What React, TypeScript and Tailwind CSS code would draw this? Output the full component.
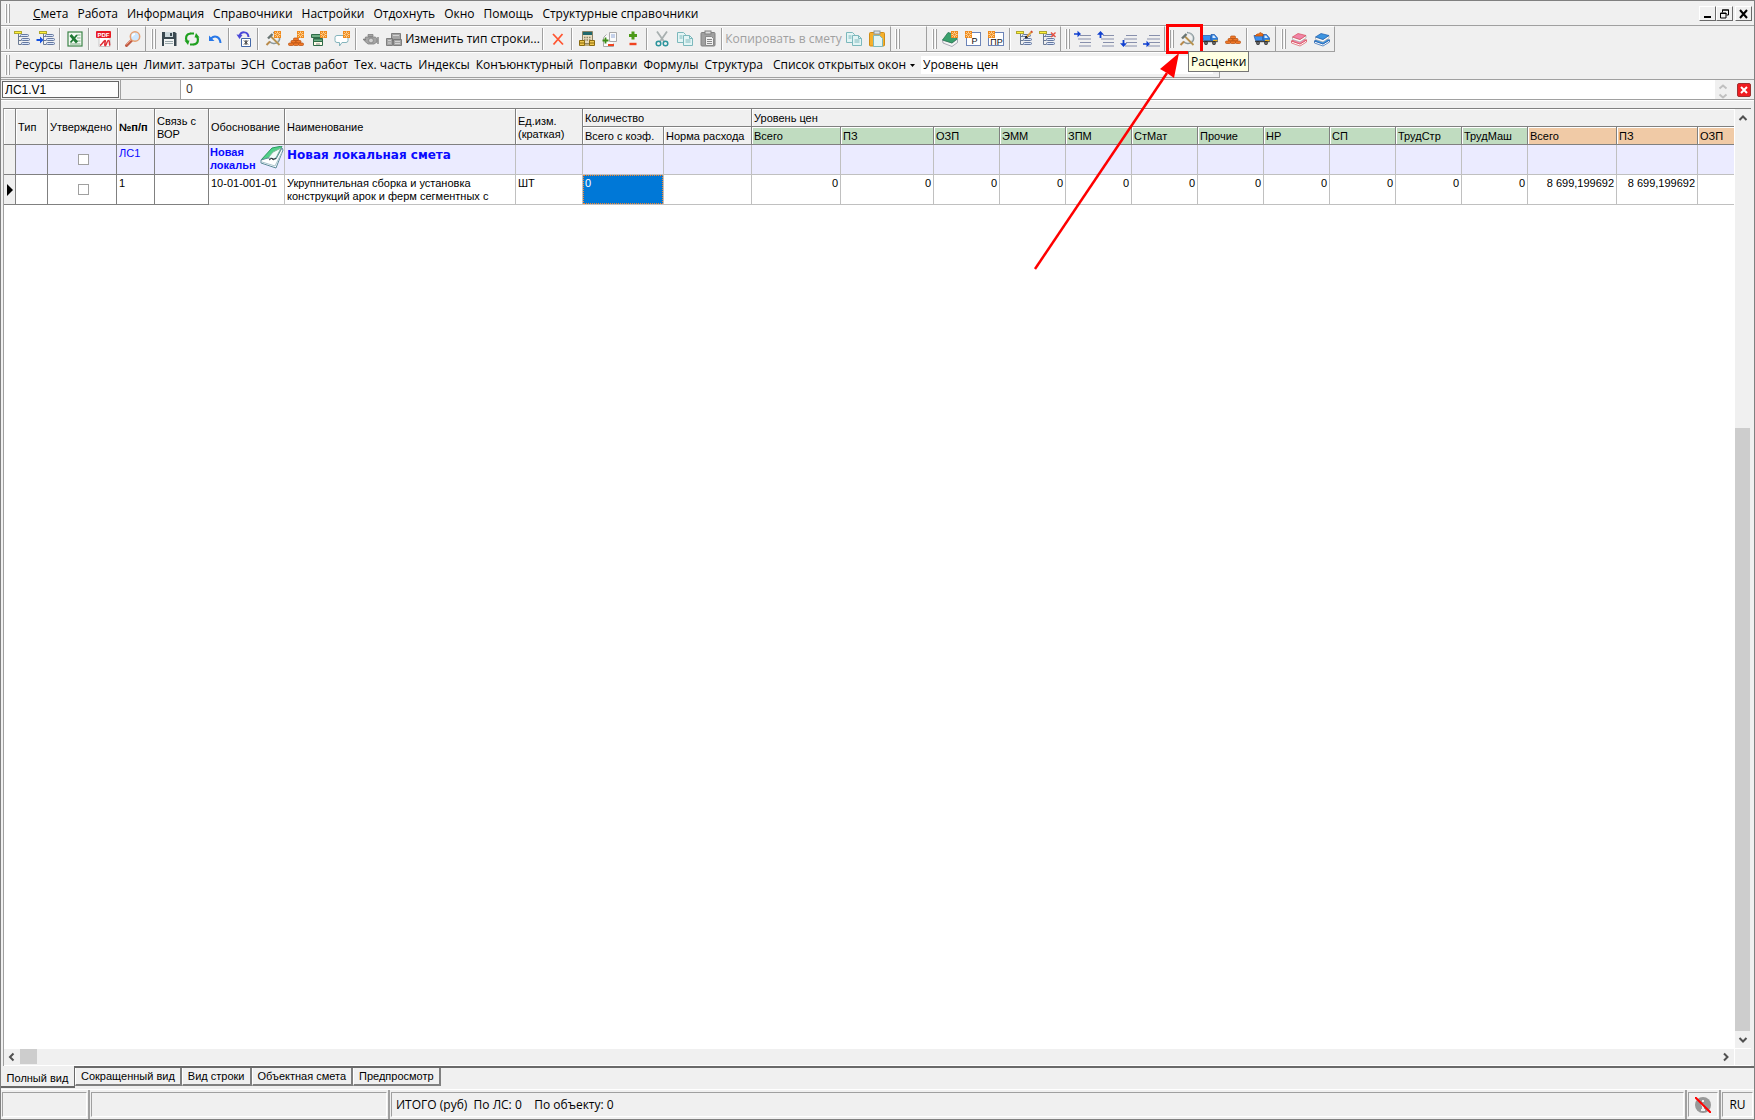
import { type ReactNode } from "react";
import clsx from "clsx";

/* Icons, all drawn on a 16x16 grid */

function Gear({ x = 9 }: { x?: number }) {
  return (
    <g transform={`translate(${x} 0)`}>
      <rect width="7" height="7" fill="#f08a1c" />
      <path d="M3.5 0.5v6M0.5 3.5h6M1.2 1.2l4.6 4.6M5.8 1.2l-4.6 4.6" stroke="#ffe2b0" strokeWidth="0.9" />
      <circle cx="3.5" cy="3.5" r="1.2" fill="#f08a1c" />
    </g>
  );
}

function TreeRows() {
  return (
    <g>
      <path d="M3.5 2v11.500h3M3.500 5.500h3M3.500 9.500h3" stroke="#6a7a94" fill="none" />
      <rect x="5.500" y="3.500" width="8" height="2" rx="1" fill="#dbe6fa" stroke="#6478a0" />
      <rect x="6.500" y="7.500" width="8" height="2" rx="1" fill="#dbe6fa" stroke="#6478a0" />
      <rect x="6.500" y="11.500" width="8" height="2" rx="1" fill="#dbe6fa" stroke="#6478a0" />
    </g>
  );
}

function TreeRoot() {
  return <rect x="-0.500" y="0.500" width="7" height="2" fill="#fff23a" stroke="#b0a830" />;
}

function SickleHammer() {
  return (
    <g fill="none">
      <path d="M8 1.500c6 .5 8.500 6 5 9.500-2.800 2.600-6.500 1.500-8.500-.5" stroke="#8a989c" strokeWidth="1.500" />
      <path d="M9 1.700c4.500 1 6 5.500 3.200 8.500" stroke="#c8d4d6" strokeWidth="0.700" />
      <path d="M5 10.500L1.500 14" stroke="#b98a4a" strokeWidth="2" />
      <path d="M6 5.500l8.500 8.500" stroke="#b8924e" strokeWidth="1.800" />
      <path d="M3 7.500L7.500 3" stroke="#6a7674" strokeWidth="2.400" />
    </g>
  );
}

function Bricks() {
  return (
    <g fill="#f07828" stroke="#b44a08" strokeWidth="0.700">
      <rect x="5.500" y="5" width="5" height="2.500" rx="1" />
      <rect x="3" y="7.500" width="5" height="2.500" rx="1" />
      <rect x="8" y="7.500" width="5" height="2.500" rx="1" />
      <rect x="0.500" y="10" width="5" height="2.500" rx="1" />
      <rect x="5.500" y="10" width="5" height="2.500" rx="1" />
      <rect x="10.500" y="10" width="5" height="2.500" rx="1" />
    </g>
  );
}

function Truck() {
  return (
    <g>
      <path d="M0 4.500h8.500v5H1.500z" fill="#3a8ff0" stroke="#1b56a8" strokeWidth="0.700" />
      <path d="M9 3.500h3.500l3 3.500v3.500H9z" fill="#2c7fe0" stroke="#1b56a8" strokeWidth="0.700" />
      <path d="M10.500 4.500h1.700l1.800 2.500h-3.500z" fill="#d8ecff" />
      <path d="M1 10.500h14.500" stroke="#444" strokeWidth="1.400" />
      <path d="M11 9.500h4.500" stroke="#f0b020" strokeWidth="1.400" />
      <circle cx="4" cy="12" r="1.900" fill="#2a2a2a" />
      <circle cx="12" cy="12" r="1.900" fill="#2a2a2a" />
      <circle cx="4" cy="12" r="0.700" fill="#ccc" />
      <circle cx="12" cy="12" r="0.700" fill="#ccc" />
    </g>
  );
}

function Books({ color, dark }: { color: string; dark: string }) {
  return (
    <g strokeWidth="0.700">
      <path d="M0.500 10L9 13l6.500-4v2L9 15l-8.500-3z" fill="#fff" stroke={dark} />
      <path d="M0.500 10L6 7.500l9.500 1.500L9 13z" fill={color} stroke={dark} />
      <path d="M1.500 6L9 8.500l6-4v2.500l-6 4-7.500-2.500z" fill="#fafafa" stroke="#aaa" />
      <path d="M1.500 6L7 2.500l8 2-6 4z" fill={color} stroke={dark} />
    </g>
  );
}

function Lines() {
  return <path d="M5 4.500h11M3 8h13M5 11.500h11M4 15h12" stroke="#8890ac" />;
}

function CopyPages() {
  return (
    <g fill="#e3f5f5" stroke="#7cb8bc">
      <path d="M0.500 1.500h6l2 2v8h-8z" />
      <path d="M6.500 4.500h6l3 3v7h-9z" />
      <path d="M12.500 4.500v3h3M2.500 5h3M2.500 7h3M8.500 9h5M8.500 11h5" fill="none" />
    </g>
  );
}

const icons: Record<string, ReactNode> = {
  tree: (
    <>
      <TreeRows />
      <TreeRoot />
    </>
  ),
  treeArrow: (
    <>
      <g transform="translate(2 0)">
        <TreeRows />
        <TreeRoot />
      </g>
      <path d="M-1.500 8H2V5.500L5.500 9 2 12.500V10h-3.500z" fill="#1450e0" />
    </>
  ),
  excel: (
    <>
      <rect x="1" y="1" width="14" height="14" fill="#f4faf4" stroke="#3c8448" strokeWidth="1.200" />
      <path d="M10 4h3.500M10 7h3.500M10 10h3.500M3 13h10.500" stroke="#7cac84" />
      <path d="M3.500 4l6.500 7.500" stroke="#1f7a34" strokeWidth="2.800" />
      <path d="M10 4l-6.500 7.500" stroke="#1f7a34" strokeWidth="1.800" />
    </>
  ),
  pdf: (
    <>
      <path d="M3 4h11v11.500H3z" fill="#fff" stroke="#c8c8c8" />
      <rect x="0" y="0" width="15" height="7" rx="1" fill="#e81c24" />
      <text x="7.500" y="5.700" textAnchor="middle" fontSize="6" fontWeight="700" fill="#fff" fontFamily="Liberation Sans, sans-serif">
        PDF
      </text>
      <path d="M4 14.500c2-1 4-5 5-5s-1 4 0 5 2-5 3.500-5 .500 4 1.500 5" fill="none" stroke="#e03038" strokeWidth="1.500" />
    </>
  ),
  magnifier: (
    <>
      <path d="M7 9L1.500 14.500" stroke="#c05a44" strokeWidth="3" strokeLinecap="round" />
      <path d="M6.500 8.500L1.500 13.500" stroke="#f0a080" strokeWidth="1" />
      <circle cx="10" cy="5.500" r="4.700" fill="#cfe8ff" stroke="#e8a070" strokeWidth="1.500" />
      <path d="M7.500 5.500a2.500 2.500 0 0 1 2.500-2.500" stroke="#fff" fill="none" strokeWidth="1.300" />
    </>
  ),
  save: (
    <>
      <path d="M1 1h13l1.500 1.500V15H1z" fill="#3a4850" />
      <rect x="4" y="1" width="8" height="5" fill="#cdd8dc" />
      <rect x="9" y="2" width="2" height="3" fill="#3a4850" />
      <rect x="3" y="8" width="10" height="7" fill="#f2f4f4" />
      <path d="M4 10.500h8M4 12.500h8" stroke="#9aa8ac" />
    </>
  ),
  refresh: (
    <g fill="none" stroke="#1fa01f" strokeWidth="2.200">
      <path d="M6.500 2.500C2 3 1 7 3 10.500" />
      <path d="M9.500 13.500C14 13 15 9 13 5.500" />
      <path d="M0.500 9.500h5l-1.500 4.500z" fill="#1fa01f" stroke="none" />
      <path d="M15.500 6.500h-5L12 2z" fill="#1fa01f" stroke="none" />
      <path d="M6 2.500h4M10 13.500H6" strokeWidth="1.800" />
    </g>
  ),
  undo: (
    <>
      <path d="M4 7.500c4-4 9-1.500 9.500 4.500" fill="none" stroke="#2878e8" strokeWidth="2" />
      <path d="M2 4.500V10h5.500z" fill="#2878e8" />
    </>
  ),
  restore: (
    <>
      <path d="M3.500 5C5 0 12 0 12.500 6" fill="none" stroke="#4a48d8" strokeWidth="2" />
      <path d="M0.500 3.500l6 .500-3 4z" fill="#4a48d8" />
      <path d="M5.500 7.500h9v8h-9z" fill="#fff" stroke="#4468a8" />
      <path d="M8 9.500l4 4M12 9.500l-4 4M10 9v5" stroke="#333" />
    </>
  ),
  rate: <SickleHammer />,
  rateNew: (
    <>
      <SickleHammer />
      <Gear />
    </>
  ),
  bricks: <Bricks />,
  bricksNew: (
    <>
      <g transform="translate(0 2)">
        <Bricks />
      </g>
      <Gear x={9} />
    </>
  ),
  cabinetNew: (
    <>
      <path d="M0.500 3.500h12v3h-12z" fill="#6fae84" stroke="#2f6b48" />
      <path d="M2.500 7.500h9v7h-9z" fill="#fffbe8" stroke="#2f6b48" />
      <path d="M2.500 8h9v2.500h-9z" fill="#6fae84" stroke="#2f6b48" />
      <path d="M5 13h4" stroke="#888" />
      <Gear />
    </>
  ),
  commentNew: (
    <>
      <path d="M3 4.500h9a2 2 0 0 1 2 2v3a2 2 0 0 1-2 2H8L5.500 15v-3.500H3a2 2 0 0 1-2-2v-3a2 2 0 0 1 2-2z" fill="#fff" stroke="#84b4bc" />
      <Gear />
    </>
  ),
  engine: (
    <g stroke="#808080" strokeWidth="0.800">
      <path d="M5 3.500h5v2H5zM2.500 6h10l1.500 2v3l-3 2H5l-3.500-3z" fill="#a4a4a4" />
      <path d="M0 8.500h3M15 6v7" strokeWidth="1.400" />
      <circle cx="8" cy="9.500" r="2.400" fill="#d0d0d0" />
    </g>
  ),
  blocks: (
    <g fill="#a4a4a4" stroke="#6c6c6c" strokeWidth="0.800">
      <path d="M5.500 2.500h9v7h-9z" />
      <path d="M0.500 7.500h6v7h-6zM7.500 8.500h8v6h-8z" />
      <path d="M7 4.500h6M2 9.500h3M2 12h3M9 10.500h5M9 12.500h5" stroke="#e0e0e0" />
    </g>
  ),
  remove: <path d="M3 3l10 10.500M12.500 3L3.500 13.500" stroke="#ff5632" strokeWidth="1.800" />,
  calc: (
    <>
      <path d="M3.500 0.500h10v12h-10z" fill="#e8dcc0" stroke="#8c8468" />
      <rect x="4" y="1" width="9" height="3" fill="#20686c" />
      <path d="M5 6.500h7M5 9h7" stroke="#8c8468" strokeDasharray="1.500 1" strokeWidth="1.400" />
      <path d="M0.500 9.500h5v5h-5zM10.500 9.500h5v5h-5z" fill="#f0c850" stroke="#8a6a10" />
      <path d="M1 12h4M11 12h4" stroke="#8a6a10" />
      <path d="M5.500 14h5" stroke="#8a6a10" />
    </>
  ),
  docPlusMinus: (
    <>
      <path d="M7.500 1.500h7v9h-7zM4.500 3.500l-3 3v9h10v-3" fill="#fbfbfb" stroke="#a8a8a8" />
      <path d="M9 4h4M9 6h4" stroke="#90a8d8" />
      <path d="M3.500 6.500v6M0.500 9.500h6" stroke="#3c8c14" strokeWidth="1.800" />
      <path d="M6 14h6" stroke="#f04420" strokeWidth="2" />
    </>
  ),
  plusMinus: (
    <>
      <path d="M8 0.500v8M4 4.500h8" stroke="#4c9a18" strokeWidth="3" />
      <path d="M4.500 13h7" stroke="#f04420" strokeWidth="2.400" />
    </>
  ),
  cut: (
    <>
      <path d="M3 0.500l7 10M13 0.500l-7 10" stroke="#a8b0b0" strokeWidth="1.800" />
      <circle cx="4.500" cy="12.500" r="2.300" fill="none" stroke="#2c949c" strokeWidth="1.500" />
      <circle cx="11.500" cy="12.500" r="2.300" fill="none" stroke="#2c949c" strokeWidth="1.500" />
    </>
  ),
  copy: <CopyPages />,
  paste: (
    <>
      <rect x="1" y="1.500" width="14" height="13.500" rx="1" fill="#a0a0a0" stroke="#808080" />
      <rect x="5" y="0" width="6" height="3" fill="#dcdcdc" stroke="#808080" />
      <path d="M5.500 5.500h6l2 2v7h-8z" fill="#f0f0f0" stroke="#888" />
      <path d="M7 8.500h5M7 10.500h5M7 12.500h5" stroke="#888" />
    </>
  ),
  pasteColor: (
    <>
      <rect x="0.500" y="1.500" width="15" height="13.500" rx="1" fill="#f5b02c" stroke="#d08c14" />
      <rect x="5" y="0" width="6" height="3" fill="#dce4e8" stroke="#8c989c" />
      <path d="M4.500 4.500h6l3 3v8h-9z" fill="#e3f5f5" stroke="#7cb8bc" />
    </>
  ),
  bookNew: (
    <>
      <path d="M0.500 9L10 12l5.500-4v3.500L10 15.500l-9-3.500z" fill="#f4f4f4" stroke="#889" strokeWidth="0.700" />
      <path d="M0.500 9L6 1.500l9 2.500v4L10 12z" fill="#3aa06c" stroke="#20704a" strokeWidth="0.700" />
      <Gear />
    </>
  ),
  pNew: (
    <>
      <rect x="1.500" y="1.500" width="14" height="13" fill="#fff" stroke="#6c84b8" />
      <text x="9.500" y="13" textAnchor="middle" fontSize="9" fill="#111" fontFamily="Liberation Sans, sans-serif">
        Р
      </text>
      <Gear x={0} />
    </>
  ),
  prNew: (
    <>
      <rect x="0.500" y="1.500" width="15" height="13" fill="#fff" stroke="#6c84b8" />
      <text x="8.500" y="13.500" textAnchor="middle" fontSize="9" fill="#111" fontFamily="Liberation Sans, sans-serif">
        ПР
      </text>
      <Gear x={0} />
    </>
  ),
  treeEdit: (
    <>
      <TreeRows />
      <TreeRoot />
      <path d="M15 0.500L10 5.500" stroke="#e0a040" strokeWidth="2" />
      <path d="M14 0l1.500 1.500" stroke="#d04030" strokeWidth="1.500" />
      <path d="M8.500 7l.500-2 1.500 1.500z" fill="#222" stroke="#222" />
    </>
  ),
  treeRemove: (
    <>
      <TreeRows />
      <TreeRoot />
      <path d="M11 1.500l4.500 4.500M15.500 1.500L11 6" stroke="#e85040" strokeWidth="1.400" />
    </>
  ),
  indentTop: (
    <>
      <Lines />
      <path d="M-1 2.200h3.500V-.300L6 3l-3.500 3.300V3.800H-1z" fill="#1040d0" />
    </>
  ),
  indentUp: (
    <>
      <Lines />
      <path d="M2.500 0L6 3.800H3.400V7H1.600V3.800H-1z" fill="#1040d0" />
    </>
  ),
  indentDown: (
    <>
      <Lines />
      <path d="M2.500 16L-1 12.200h2.600V9h1.800v3.200H6z" fill="#1040d0" />
    </>
  ),
  indentBottom: (
    <>
      <Lines />
      <path d="M-1 12.200h3.500v-2.500L6 13l-3.500 3.300v-2.500H-1z" fill="#1040d0" />
    </>
  ),
  truck: <Truck />,
  truckBricks: (
    <>
      <Truck />
      <path d="M1 5L3 3h1.500L6 1.500 9 3v2z" fill="#e8701c" stroke="#b44a08" strokeWidth="0.700" />
    </>
  ),
  booksRed: <Books color="#f084a8" dark="#d84c58" />,
  booksBlue: <Books color="#3c94e0" dark="#1c5cac" />,
};

function Icon({ name }: { name: string }) {
  return (
    <svg viewBox="0 0 16 16" className="size-4 overflow-visible" aria-hidden="true">
      {icons[name]}
    </svg>
  );
}

/* Toolbar parts */

function Grip() {
  return (
    <div className="flex gap-px py-[2px] pr-px pl-[3px] self-stretch">
      <span className="w-[2px] border-l border-l-white border-r border-r-[#a0a0a0]" />
      <span className="w-[2px] border-l border-l-white border-r border-r-[#a0a0a0]" />
    </div>
  );
}

function Separator() {
  return (
    <span className="w-[6px] self-stretch flex py-px pl-[2px]">
      <span className="w-[2px] border-l border-l-[#a0a0a0] border-r border-r-white" />
    </span>
  );
}

function ToolButton({ icon, label }: { icon: string; label: string }) {
  return (
    <button type="button" aria-label={label} className="w-[23px] h-[22px] flex items-center justify-center shrink-0">
      <Icon name={icon} />
    </button>
  );
}

function Band({ children, className }: { children?: ReactNode; className?: string }) {
  return (
    <div
      className={clsx(
        "flex items-center h-[26px] shrink-0 border-t border-t-white border-b border-b-[#a0a0a0] border-r border-r-[#a0a0a0]",
        className
      )}
    >
      {children}
    </div>
  );
}

type Tool = [icon: string, label: string] | "|";

function Tools({ items }: { items: Tool[] }) {
  return items.map((item, i) =>
    item === "|" ? <Separator key={i} /> : <ToolButton key={i} icon={item[0]} label={item[1]} />
  );
}

const menu = [
  "Работа",
  "Информация",
  "Справочники",
  "Настройки",
  "Отдохнуть",
  "Окно",
  "Помощь",
  "Структурные справочники",
];

const panels = [
  "Ресурсы",
  "Панель цен",
  "Лимит. затраты",
  "ЭСН",
  "Состав работ",
  "Тех. часть",
  "Индексы",
  "Конъюнктурный",
  "Поправки",
  "Формулы",
  "Структура",
];

function WindowButton({ label, children }: { label: string; children: ReactNode }) {
  return (
    <button
      type="button"
      aria-label={label}
      className="w-[17px] h-[15px] flex items-center justify-center bg-[#f0f0f0] border border-t-white border-l-white border-r-[#696969] border-b-[#696969]"
    >
      <svg viewBox="0 0 11 10" className="w-[11px] h-[10px]" fill="none" stroke="#000" aria-hidden="true">
        {children}
      </svg>
    </button>
  );
}

function MenuBar() {
  return (
    <nav className="flex items-center h-[25px] pt-px pl-px pr-[2px] border-b border-b-[#a0a0a0]">
      <Grip />
      <div className="flex gap-2 ml-[22px]">
        <button type="button" className="mr-px">
          <span className="underline">С</span>мета
        </button>
        {menu.map((item) => (
          <button key={item} type="button" className="mr-px">
            {item}
          </button>
        ))}
      </div>
      <div className="flex ml-auto">
        <WindowButton label="Свернуть">
          <path d="M2 8h7" strokeWidth="2" />
        </WindowButton>
        <WindowButton label="Восстановить">
          <path d="M3.500 3.500V1h6v5H7.500M3 1h7" />
          <path d="M1.500 4h5.500v5H1.500zM1 4.500h6.500" />
        </WindowButton>
        <span className="w-[2px]" />
        <WindowButton label="Закрыть">
          <path d="M2 1l7 8M9 1L2 9" strokeWidth="2" />
        </WindowButton>
      </div>
    </nav>
  );
}

function RatesHint() {
  return (
    <>
      <svg
        className="absolute z-10 right-[18px] top-[23px] w-[146px] h-[220px] overflow-visible pointer-events-none"
        viewBox="0 0 146 220"
        aria-hidden="true"
      >
        <path d="M1 218L133 22" stroke="#f00" strokeWidth="2.500" />
        <path d="M145 2L140 27L133 22L126 18Z" fill="#f00" />
      </svg>
      <span className="absolute z-10 left-0 -right-[5px] -top-1 h-[30px] border-3 border-[#f00] pointer-events-none" />
      <span
        role="tooltip"
        className="absolute z-20 left-[22px] top-[23px] h-[21px] px-[2px] flex items-center bg-[#ffffe1] border border-[#767676] whitespace-nowrap"
      >
        Расценки
      </span>
    </>
  );
}

function Toolbar() {
  return (
    <div className="flex">
      <Band className="pl-px pr-px">
        <Grip />
        <Tools
          items={[
            ["tree", "Структура"],
            ["treeArrow", "Перейти в структуре"],
            "|",
            ["excel", "Экспорт в Excel"],
            "|",
            ["pdf", "Экспорт в PDF"],
            "|",
            ["magnifier", "Поиск"],
          ]}
        />
      </Band>
      <Band className="pl-[2px]">
        <Grip />
        <Tools
          items={[
            ["save", "Сохранить"],
            ["refresh", "Обновить"],
            ["undo", "Отменить"],
            "|",
            ["restore", "Восстановить"],
            "|",
            ["rateNew", "Новая расценка"],
            ["bricksNew", "Новый материал"],
            ["cabinetNew", "Новое оборудование"],
            ["commentNew", "Новый комментарий"],
            "|",
            ["engine", "Механизмы"],
            ["blocks", "Блоки"],
          ]}
        />
        <button type="button" className="w-[135px] whitespace-nowrap">
          Изменить тип строки...
        </button>
        <Tools
          items={[
            "|",
            ["remove", "Удалить"],
            "|",
            ["calc", "Расчет"],
            ["docPlusMinus", "Поправки документа"],
            ["plusMinus", "Знак"],
            "|",
            ["cut", "Вырезать"],
            ["copy", "Копировать"],
            ["paste", "Вставить"],
            "|",
          ]}
        />
        <button type="button" className="w-[117px] whitespace-nowrap text-[#a0a0a0]">
          Копировать в смету
        </button>
        <Tools
          items={[
            ["copy", "Копировать в смету как есть"],
            ["pasteColor", "Вставить в смету"],
          ]}
        />
        <span className="w-[2px]" />
      </Band>
      <Band className="w-9 pl-px">
        <Grip />
      </Band>
      <Band className="pl-[2px] pr-px">
        <Grip />
        <Tools
          items={[
            ["bookNew", "Новая книга"],
            ["pNew", "Новый раздел"],
            ["prNew", "Новый подраздел"],
            "|",
            ["treeEdit", "Изменить структуру"],
            ["treeRemove", "Удалить структуру"],
          ]}
        />
      </Band>
      <Band className="pl-px pr-px">
        <Grip />
        <Tools
          items={[
            ["indentTop", "Уровень вверх"],
            ["indentUp", "Сдвинуть вверх"],
            ["indentDown", "Сдвинуть вниз"],
            ["indentBottom", "Уровень вниз"],
          ]}
        />
      </Band>
      <Band className="pl-px pr-[2px]">
        <div className="relative flex">
          <Grip />
          <ToolButton icon="rate" label="Расценки" />
          <RatesHint />
        </div>
        <Tools
          items={[
            ["truck", "Машины"],
            ["bricks", "Материалы"],
            "|",
            ["truckBricks", "Перевозка"],
          ]}
        />
      </Band>
      <Band className="pl-[2px] pr-px">
        <Grip />
        <Tools
          items={[
            ["booksRed", "Сборники"],
            ["booksBlue", "Справочники"],
          ]}
        />
      </Band>
    </div>
  );
}

function PanelBar() {
  return (
    <div className="flex">
      <Band className="pl-px pr-[6px]">
        <Grip />
        <div className="flex gap-[6px] ml-1">
          {panels.map((item) => (
            <button key={item} type="button" className="whitespace-nowrap">
              {item}
            </button>
          ))}
          <button type="button" className="flex items-center gap-1 whitespace-nowrap ml-1">
            Список открытых окон
            <svg viewBox="0 0 5 3" className="w-[5px] h-[3px]" aria-hidden="true">
              <path d="M0 0h5L2.500 3z" />
            </svg>
          </button>
        </div>
        <select aria-label="Уровень цен" className="appearance-none w-[292px] h-[18px] ml-[6px] pl-[2px] bg-white">
          <option>Уровень цен</option>
        </select>
      </Band>
    </div>
  );
}

function FormulaBar() {
  return (
    <div className="flex h-[21px] border-y border-[#a0a0a0] bg-white mt-px">
      <div className="flex bg-[#f0f0f0] p-px">
        <input
          aria-label="Ячейка"
          defaultValue="ЛС1.V1"
          className="w-[117px] h-[17px] px-[2px] border border-[#646464] bg-[#fcfcfc] font-['Liberation_Sans',sans-serif]"
        />
      </div>
      <div className="w-[61px] border-x border-[#a0a0a0] bg-[#f0f0f0]" />
      <input
        aria-label="Значение"
        defaultValue="0"
        className="flex-1 min-w-0 pl-[5px] pb-px text-[#3a3028] outline-none"
      />
      <div className="flex items-center gap-[6px] pr-[3px] bg-[#f0f0f0]">
        <svg viewBox="0 0 16 19" className="w-4 h-[19px]" fill="none" stroke="#c0c0c0" strokeWidth="2" aria-hidden="true">
          <path d="M4.500 8.500L8 5.500l3.500 3M4.500 14.500L8 17.500l3.500-3" />
        </svg>
        <button
          type="button"
          aria-label="Закрыть панель"
          className="size-[14px] flex items-center justify-center rounded-xs border border-[#a03030] bg-[#f01c20]"
        >
          <svg viewBox="0 0 8 8" className="size-2" stroke="#fff" strokeWidth="2" aria-hidden="true">
            <path d="M1 1l6 6M7 1L1 7" />
          </svg>
        </button>
      </div>
    </div>
  );
}

/* Grid */

const widths = [12, 32, 69, 38, 54, 76, 231, 67, 81, 88, 89, 93, 66, 66, 66, 66, 66, 66, 66, 66, 66, 89, 81, 66];

const green = ["Всего", "ПЗ", "ОЗП", "ЭММ", "ЗПМ", "СтМат", "Прочие", "НР", "СП", "ТрудСтр", "ТрудМаш"];
const orange = ["Всего", "ПЗ", "ОЗП"];

function Head({
  children,
  className,
  rowSpan,
  colSpan,
}: {
  children?: ReactNode;
  className?: string;
  rowSpan?: number;
  colSpan?: number;
}) {
  return (
    <th
      rowSpan={rowSpan}
      colSpan={colSpan}
      className={clsx(
        "pt-[2px] pl-[2px] text-left leading-[13px] border-r border-b border-[#808080] shadow-[inset_1px_1px_0_#fff] overflow-hidden",
        className
      )}
    >
      {children}
    </th>
  );
}

const fixedCell = "border-r border-b border-[#808080] pl-[2px]";
const cell = "border-r border-b border-[#c0c0c0] px-[2px] align-top";

function ApproveBox({ label }: { label: string }) {
  return (
    <input
      type="checkbox"
      aria-label={label}
      className="block mx-auto appearance-none size-[11px] border border-[#a0a0a0] bg-white"
    />
  );
}

function LocalBook() {
  return (
    <svg viewBox="0 0 24 24" className="w-6 h-6 shrink-0" aria-hidden="true">
      <path d="M1 14L12 2l10-2-6 12z" fill="#4fd088" stroke="#2c9a60" />
      <path d="M8 12L13 6l8-4-6 12z" fill="#f4fafa" stroke="#7ab898" />
      <path d="M1 14l7-2 8 1 6-11 1 2-7 18-15-5z" fill="#fff" stroke="#5c8a98" />
      <path d="M2 16l13 4 7-14" fill="none" stroke="#a8c4cc" />
      <path d="M9 14l3-2 1 2 3-2" fill="none" stroke="#333" />
    </svg>
  );
}

function Grid() {
  return (
    <table className="table-fixed w-[1760px] border-separate border-spacing-0 leading-[13px]">
      <colgroup>
        {widths.map((width, i) => (
          <col key={i} style={{ width }} />
        ))}
      </colgroup>
      <thead className="bg-[#f0f0f0] [&_th]:font-normal">
        <tr className="h-[18px]">
          <Head rowSpan={2} />
          <Head rowSpan={2}>Тип</Head>
          <Head rowSpan={2}>Утверждено</Head>
          <Head rowSpan={2}>
            <b>№п/п</b>
          </Head>
          <Head rowSpan={2}>Связь с ВОР</Head>
          <Head rowSpan={2}>Обоснование</Head>
          <Head rowSpan={2}>Наименование</Head>
          <Head rowSpan={2}>Ед.изм. (краткая)</Head>
          <Head colSpan={2}>Количество</Head>
          <Head colSpan={14}>Уровень цен</Head>
        </tr>
        <tr className="h-[18px]">
          <Head>Всего с коэф.</Head>
          <Head className="whitespace-nowrap">Норма расхода</Head>
          {green.map((name) => (
            <Head key={name} className="bg-[#c0dcc0]">
              {name}
            </Head>
          ))}
          {orange.map((name) => (
            <Head key={name} className="bg-[#f0caa6]">
              {name}
            </Head>
          ))}
        </tr>
      </thead>
      <tbody>
        <tr className="h-[30px] bg-[#ebebff] text-[#0a0aff]">
          <td className={clsx(fixedCell, "bg-[#f0f0f0]")} />
          <td className={fixedCell} />
          <td className={fixedCell}>
            <ApproveBox label="Утверждено ЛС1" />
          </td>
          <td className={clsx(fixedCell, "pt-[2px] align-top")}>ЛС1</td>
          <td className={fixedCell} />
          <td className="border-r border-b border-[#c0c0c0] align-top">
            <div className="flex h-[29px] pt-px overflow-hidden font-bold">
              <span className="w-[51px] pl-px shrink-0 overflow-hidden">Новая локальн</span>
              <LocalBook />
            </div>
          </td>
          <td className={clsx(cell, "pt-[2px] font-['DejaVu_Sans',sans-serif] font-bold text-xs")}>
            Новая локальная смета
          </td>
          {widths.slice(7).map((_, i) => (
            <td key={i} className={cell} />
          ))}
        </tr>
        <tr className="h-[30px]">
          <td className={clsx(fixedCell, "bg-[#f0f0f0]")}>
            <svg viewBox="0 0 6 12" className="ml-px w-[6px] h-3" aria-hidden="true">
              <path d="M0 0v12l6-6z" />
            </svg>
          </td>
          <td className={fixedCell} />
          <td className={fixedCell}>
            <ApproveBox label="Утверждено 1" />
          </td>
          <td className={clsx(fixedCell, "pt-[2px] align-top")}>1</td>
          <td className={fixedCell} />
          <td className={clsx(cell, "pt-[2px]")}>10-01-001-01</td>
          <td className={clsx(cell, "pt-[2px]")}>
            <div className="h-[27px] overflow-hidden">
              Укрупнительная сборка и установка
              <br />
              конструкций арок и ферм сегментных с
            </div>
          </td>
          <td className={clsx(cell, "pt-[2px]")}>ШТ</td>
          <td className="border-r border-b border-[#c0c0c0] align-top">
            <div className="h-[29px] pt-px pl-px bg-[#0078d7] text-white border border-dotted border-[#ff8728]">0</div>
          </td>
          <td className={cell} />
          {green.map((name) => (
            <td key={name} className={clsx(cell, "pt-[2px] text-right")}>
              0
            </td>
          ))}
          <td className={clsx(cell, "pt-[2px] text-right")}>8 699,199692</td>
          <td className={clsx(cell, "pt-[2px] text-right")}>8 699,199692</td>
          <td className={cell} />
        </tr>
      </tbody>
    </table>
  );
}

function Chevron({ d }: { d: string }) {
  return (
    <svg viewBox="0 0 16 16" className="size-4" fill="none" stroke="#505050" strokeWidth="2" aria-hidden="true">
      <path d={d} />
    </svg>
  );
}

function Workspace() {
  return (
    <main className="flex-1 min-h-0 flex flex-col ml-[2px] mr-[3px] mt-[7px] border-t border-t-[#808080] border-l border-l-[#a0a0a0] bg-white text-[11px] font-['Liberation_Sans',sans-serif]">
      <div className="flex-1 min-h-0 flex">
        <div className="flex-1 min-w-0 overflow-hidden">
          <Grid />
        </div>
        <div className="flex flex-col w-4 ml-px bg-[#f0f0f0]">
          <button type="button" aria-label="Вверх" className="h-[18px]">
            <Chevron d="M4.500 10L8 6.500l3.500 3.500" />
          </button>
          <div className="flex-1 flex flex-col">
            <div className="grow-[301]" />
            <div className="grow-[604] w-[15px] bg-[#cdcdcd]" />
          </div>
          <button type="button" aria-label="Вниз" className="h-[17px]">
            <Chevron d="M4.500 6L8 9.500 11.500 6" />
          </button>
        </div>
      </div>
      <div className="flex h-4 mt-px mb-px">
        <div className="flex-1 flex bg-[#f0f0f0]">
          <button type="button" aria-label="Влево">
            <Chevron d="M9.500 4.500L6 8l3.500 3.500" />
          </button>
          <div className="w-[17px] h-[15px] bg-[#cdcdcd]" />
          <button type="button" aria-label="Вправо" className="ml-auto">
            <Chevron d="M6 4.500L9.500 8 6 11.500" />
          </button>
        </div>
        <div className="w-4 ml-px bg-[#f0f0f0]" />
      </div>
    </main>
  );
}

const tabs = ["Сокращенный вид", "Вид строки", "Объектная смета", "Предпросмотр"];

function Tabs() {
  return (
    <div role="tablist" className="flex h-[23px] items-start text-[11px] font-['Liberation_Sans',sans-serif]">
      <button
        type="button"
        role="tab"
        aria-selected="true"
        className="h-[22px] w-[74px] pt-[4px] bg-[#f0f0f0] border-r border-b-2 border-[#696969] whitespace-nowrap"
      >
        Полный вид
      </button>
      <div className="flex-1 flex border-t-2 border-t-[#696969]">
        {tabs.map((tab) => (
          <button
            key={tab}
            type="button"
            role="tab"
            aria-selected="false"
            className="h-[18px] px-[5px] border-l border-l-white border-r-2 border-b-2 border-r-[#808080] border-b-[#808080] whitespace-nowrap"
          >
            {tab}
          </button>
        ))}
      </div>
    </div>
  );
}

function StatusPanel({ children, className }: { children?: ReactNode; className?: string }) {
  return (
    <div className={clsx("flex border-r-2 border-r-[#a0a0a0] py-[2px] pl-px pr-px last:border-r-0", className)}>
      <div className="flex-1 flex items-center border border-t-[#a0a0a0] border-l-[#a0a0a0] border-r-white border-b-white">
        {children}
      </div>
    </div>
  );
}

function StatusBar() {
  return (
    <footer className="flex h-[30px] border-t border-t-white">
      <StatusPanel className="w-[89px]" />
      <StatusPanel className="w-[300px]" />
      <StatusPanel className="flex-1">
        <span className="whitespace-pre pl-1">{"ИТОГО (руб)  По ЛС: 0    По объекту: 0"}</span>
      </StatusPanel>
      <StatusPanel className="w-[34px]">
        <svg viewBox="0 0 16 16" className="size-4 mx-auto" aria-hidden="true">
          <circle cx="8" cy="8" r="8" fill="#989898" />
          <path d="M8 3v2M8 7v6M6 13h4M6 7.500h2" stroke="#f0f0f0" strokeWidth="2" />
          <path d="M0 0l16 16" stroke="#f00" strokeWidth="2" />
        </svg>
      </StatusPanel>
      <StatusPanel className="w-[33px]">
        <span className="mx-auto">RU</span>
      </StatusPanel>
    </footer>
  );
}

export default function App() {
  return (
    <div className="h-screen flex flex-col overflow-hidden bg-[#f0f0f0] text-black text-xs font-['Open_Sans',sans-serif] border border-[#808080]">
      <MenuBar />
      <Toolbar />
      <PanelBar />
      <FormulaBar />
      <div className="h-px bg-white" />
      <Workspace />
      <Tabs />
      <StatusBar />
    </div>
  );
}
